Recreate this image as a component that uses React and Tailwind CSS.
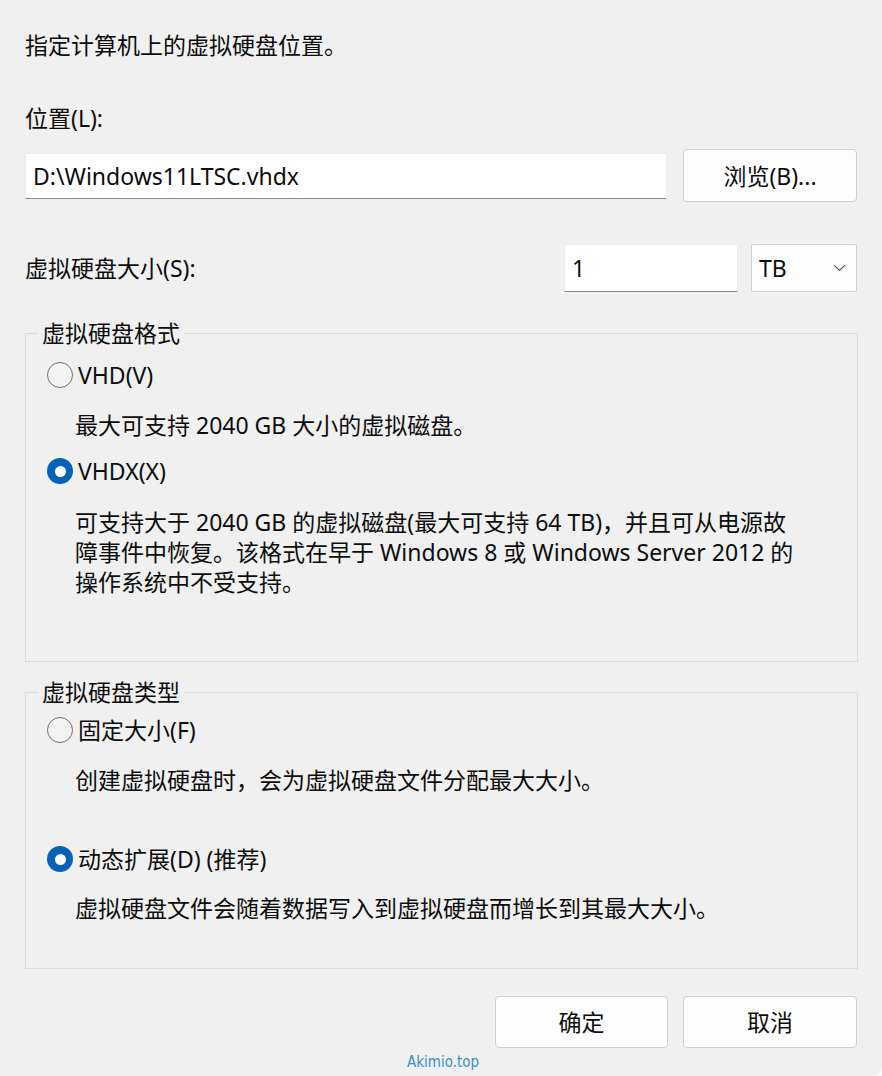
import React from "react";

const FONT = { fontFamily: '"Noto Sans", "Noto Sans CJK SC", sans-serif' };

function Radio({ checked, label }) {
  return (
    <div className="flex h-[30px] items-center pl-[21px]">
      {checked ? (
        <span className="flex h-[26px] w-[26px] items-center justify-center rounded-full bg-[#0562b8]">
          <span className="h-[11px] w-[11px] rounded-full bg-white" />
        </span>
      ) : (
        <span className="h-[26px] w-[26px] rounded-full border-[1.5px] border-[#6f6f6f] bg-[#f3f3f3]" />
      )}
      <span className="ml-[5px]">{label}</span>
    </div>
  );
}

function Group({ title, children, className }) {
  return (
    <fieldset className={"w-[833px] border border-[#dcdcdc] " + className}>
      <legend className="ml-[12px] px-[4px] leading-[30px]">{title}</legend>
      {children}
    </fieldset>
  );
}

export default function App() {
  return (
    <div className="h-[1076px] w-[882px] overflow-hidden bg-[#fafafa]" style={FONT}>
      <div className="h-[1076px] rounded-br-[10px] bg-[#f0f0f0] px-[25px] pt-[30px] text-[23px] leading-[30px] text-[#0d0d0d]">
        <div className="h-[30px]">指定计算机上的虚拟硬盘位置。</div>
        <div className="mt-[43px] h-[30px]">位置(L):</div>

        <div className="mt-[16px] flex h-[53px] items-center">
          <div className="flex h-[46px] w-[642px] items-center border border-b-[#8a8a8a] border-[#ececec] bg-white pl-[7px]">
            D:\Windows11LTSC.vhdx
          </div>
          <button className="ml-[16px] flex h-[53px] w-[174px] items-center justify-center rounded-[4px] border border-[#cfcfcf] bg-[#fdfdfd]">
            浏览(B)...
          </button>
        </div>

        <div className="mt-[42px] flex h-[48px] items-center">
          <div className="flex-1">虚拟硬盘大小(S):</div>
          <div className="flex h-[48px] w-[174px] items-center border border-b-[#8a8a8a] border-[#ececec] bg-white pl-[7px]">
            1
          </div>
          <div className="ml-[13px] flex h-[48px] w-[106px] items-center justify-between rounded-[2px] border border-[#d2d2d2] bg-[#fdfdfd] pl-[7px] pr-[10px]">
            <span>TB</span>
            <svg width="13" height="8" viewBox="0 0 13 8" fill="none">
              <path d="M1 1.2 L6.5 6.5 L12 1.2" stroke="#555" strokeWidth="1.1" />
            </svg>
          </div>
        </div>

        <Group title="虚拟硬盘格式" className="mt-[26px] pb-[64px]">
          <div className="mt-[12px]">
            <Radio checked={false} label="VHD(V)" />
          </div>
          <div className="mt-[20px] pl-[49px]">最大可支持 2040 GB 大小的虚拟磁盘。</div>
          <div className="mt-[16px]">
            <Radio checked label="VHDX(X)" />
          </div>
          <div className="mt-[21px] pl-[49px] pr-[10px]">
            <div className="whitespace-nowrap">可支持大于 2040 GB 的虚拟磁盘(最大可支持 64 TB)，并且可从电源故</div>
            <div className="whitespace-nowrap">障事件中恢复。该格式在早于 Windows 8 或 Windows Server 2012 的</div>
            <div>操作系统中不受支持。</div>
          </div>
        </Group>

        <Group title="虚拟硬盘类型" className="mt-[15px] pb-[45px]">
          <div className="mt-[8px]">
            <Radio checked={false} label="固定大小(F)" />
          </div>
          <div className="mt-[20px] pl-[49px]">创建虚拟硬盘时，会为虚拟硬盘文件分配最大大小。</div>
          <div className="mt-[49px]">
            <Radio checked label="动态扩展(D) (推荐)" />
          </div>
          <div className="mt-[19px] pl-[49px]">虚拟硬盘文件会随着数据写入到虚拟硬盘而增长到其最大大小。</div>
        </Group>

        <div className="mt-[27px] flex justify-end gap-[15px]">
          <button className="flex h-[52px] w-[173px] items-center justify-center rounded-[4px] border border-[#cfcfcf] bg-[#fdfdfd]">
            确定
          </button>
          <button className="flex h-[52px] w-[174px] items-center justify-center rounded-[4px] border border-[#cfcfcf] bg-[#fdfdfd]">
            取消
          </button>
        </div>

        <div
          className="ml-[382px] mt-[4px] text-[15px] leading-[20px] text-[#3a8fc9]"
          style={{ fontFamily: '"DejaVu Sans Condensed", "DejaVu Sans", sans-serif' }}
        >
          Akimio.top
        </div>
      </div>
    </div>
  );
}
